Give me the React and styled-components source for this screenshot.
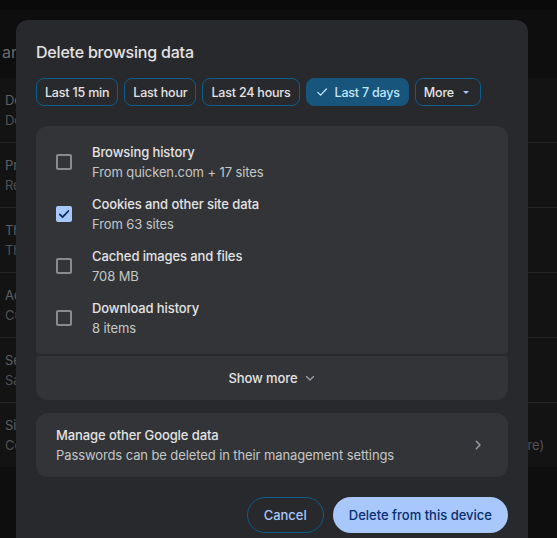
import styled, { createGlobalStyle } from 'styled-components';

const GlobalStyle = createGlobalStyle`
  html, body {
    margin: 0;
    background: #0e0e0e;
    font-family: Inter, "Noto Sans", "Liberation Sans", sans-serif;
    -webkit-font-smoothing: antialiased;
  }
`

const settingsRows = [
  {title: 'Delete browsing data', text: 'Delete history, cookies, cache, and more'},
  {title: 'Privacy Guide', text: 'Review key privacy and security controls'},
  {title: 'Third-party cookies', text: 'Third-party cookies are blocked in Incognito mode'},
  {title: 'Ad privacy', text: 'Customize the info used by sites to show you ads'},
  {title: 'Security', text: 'Safe Browsing (protection from dangerous sites) and other security settings'},
  {title: 'Site settings', text: 'Controls what information sites can use and show (location, camera, pop-ups, and more)'},
]

const ranges = ['Last 15 min', 'Last hour', 'Last 24 hours', 'Last 7 days']

const dataTypes = [
  {title: 'Browsing history', text: 'From quicken.com + 17 sites', checked: false},
  {title: 'Cookies and other site data', text: 'From 63 sites', checked: true},
  {title: 'Cached images and files', text: '708 MB', checked: false},
  {title: 'Download history', text: '8 items', checked: false},
]

const CheckIcon = ({size = 12, color = 'currentColor', width = 1.6}) => (
  <svg width={size} height={size} viewBox="0 0 12 12" fill="none">
    <path d="M1.8 6.4 L4.6 9.1 L10.4 3" stroke={color} strokeWidth={width} strokeLinecap="round" strokeLinejoin="round"/>
  </svg>
)

const Chevron = ({dir = 'down'}) => (
  <svg width="12" height="12" viewBox="0 0 12 12" fill="none">
    {dir === 'down'
      ? <path d="M2.5 4.5 L6 8 L9.5 4.5" stroke="#9aa0a6" strokeWidth="1.3" strokeLinecap="round" strokeLinejoin="round"/>
      : <path d="M4.3 2.2 L8 6 L4.3 9.8" stroke="#9aa0a6" strokeWidth="1.4" strokeLinecap="round" strokeLinejoin="round"/>}
  </svg>
)

const App = () => {
  return (
    <Page>
      <GlobalStyle/>
      <TopStrip/>
      <Header>and security</Header>
      <SettingsCard>
        {settingsRows.map(row => (
          <SettingsRow key={row.title}>
            <RowTitle>{row.title}</RowTitle>
            <RowText>{row.text}</RowText>
          </SettingsRow>
        ))}
      </SettingsCard>

      <Dialog>
        <Title>Delete browsing data</Title>

        <Chips>
          {ranges.map(r => (
            <Chip key={r} $selected={r === 'Last 7 days'}>
              {r === 'Last 7 days' && <CheckIcon size={12} width={1.3}/>}
              {r}
            </Chip>
          ))}
          <Chip $more>
            More
            <Caret/>
          </Chip>
        </Chips>

        <TypesPanel>
          {dataTypes.map(item => (
            <TypeItem key={item.title}>
              <Checkbox $checked={item.checked}>
                {item.checked && <CheckIcon size={12} color="#0b2a5e" width={1.8}/>}
              </Checkbox>
              <div>
                <ItemTitle>{item.title}</ItemTitle>
                <ItemText>{item.text}</ItemText>
              </div>
            </TypeItem>
          ))}
        </TypesPanel>
        <ShowMore>
          Show more
          <Chevron dir="down"/>
        </ShowMore>

        <ManagePanel>
          <div>
            <ItemTitle>Manage other Google data</ItemTitle>
            <ItemText>Passwords can be deleted in their management settings</ItemText>
          </div>
          <Chevron dir="right"/>
        </ManagePanel>

        <Actions>
          <CancelButton>Cancel</CancelButton>
          <DeleteButton>Delete from this device</DeleteButton>
        </Actions>
      </Dialog>
    </Page>
  )
}
export default App

const Page = styled.div`
  position: relative;
  height: 538px;
  overflow: hidden;
  background: #0e0e0e;
`

const TopStrip = styled.div`
  height: 10px;
  background: #0a0a0a;
`

const Header = styled.div`
  height: 68px;
  box-sizing: border-box;
  padding: 32px 0 0 2px;
  color: #6b6b6b;
  font-size: 16px;
  line-height: 20px;
  white-space: nowrap;
`

const SettingsCard = styled.div`
  background: #131314;
  height: 389px;
`

const SettingsRow = styled.div`
  height: 65px;
  box-sizing: border-box;
  padding: 12px 5px 0;
  border-bottom: 1px solid #242526;
  white-space: nowrap;
  letter-spacing: -0.08px;

  &:last-child {
    border-bottom: none;
  }
`

const RowTitle = styled.div`
  font-size: 13px;
  line-height: 20px;
  color: #5f6062;
`

const RowText = styled.div`
  font-size: 13px;
  line-height: 20px;
  color: #505153;
`

const Dialog = styled.div`
  position: absolute;
  left: 16px;
  top: 20px;
  width: 512px;
  bottom: -20px;
  box-sizing: border-box;
  padding: 20px 20px 0;
  background: #28292c;
  border-radius: 12px;
  display: flex;
  flex-direction: column;
`

const Title = styled.h2`
  margin: 0;
  font-size: 16px;
  line-height: 24px;
  font-weight: 500;
  color: #e3e3e3;
  letter-spacing: -0.2px;
`

const Chips = styled.div`
  display: flex;
  gap: 6px;
  margin-top: 14px;
`

const Chip = styled.div`
  height: 28px;
  box-sizing: border-box;
  display: flex;
  align-items: center;
  gap: 7px;
  padding: ${p => p.$selected ? '0 8px 0 9px' : p.$more ? '0 11px 0 8px' : '0 8px'};
  border: 1px solid ${p => p.$selected ? '#17557c' : '#0b5d8c'};
  background: ${p => p.$selected ? '#17557c' : 'transparent'};
  border-radius: 8px;
  font-size: 12.5px;
  letter-spacing: -0.2px;
  font-weight: 500;
  color: ${p => p.$selected ? '#c2e7ff' : '#e3e3e3'};
  white-space: nowrap;
`

const Caret = styled.span`
  width: 0;
  height: 0;
  margin-left: 2px;
  border-left: 3.5px solid transparent;
  border-right: 3.5px solid transparent;
  border-top: 3.5px solid #a8c7fa;
`

const TypesPanel = styled.div`
  margin-top: 20px;
  background: #333438;
  border-radius: 12px 12px 4px 4px;
  padding: 16px 0;
  display: flex;
  flex-direction: column;
  gap: 12px;
`

const TypeItem = styled.div`
  display: flex;
  align-items: center;
  gap: 20px;
  padding-left: 20px;
`

const Checkbox = styled.div`
  width: 16px;
  height: 16px;
  box-sizing: border-box;
  border-radius: 2px;
  border: 2px solid ${p => p.$checked ? '#a8c7fa' : '#8a8b8d'};
  background: ${p => p.$checked ? '#a8c7fa' : 'transparent'};
  display: grid;
  place-items: center;
  flex: none;
`

const ItemTitle = styled.div`
  font-size: 13px;
  line-height: 20px;
  font-weight: 500;
  color: #e3e3e3;
  letter-spacing: -0.1px;
`

const ItemText = styled.div`
  font-size: 13px;
  line-height: 20px;
  color: #c4c7c5;
  letter-spacing: -0.1px;
`

const ShowMore = styled.div`
  margin-top: 2px;
  height: 44px;
  background: #333438;
  border-radius: 4px 4px 12px 12px;
  display: flex;
  align-items: center;
  justify-content: center;
  gap: 6px;
  font-size: 13px;
  font-weight: 500;
  color: #e3e3e3;
  letter-spacing: -0.1px;
`

const ManagePanel = styled.div`
  margin-top: 13px;
  height: 64px;
  box-sizing: border-box;
  padding: 0 24px 0 20px;
  background: #333438;
  border-radius: 12px;
  display: flex;
  align-items: center;
  justify-content: space-between;
`

const Actions = styled.div`
  display: flex;
  justify-content: flex-end;
  gap: 9px;
  margin-top: 20px;
`

const Button = styled.button`
  height: 36px;
  box-sizing: border-box;
  border-radius: 18px;
  font-family: inherit;
  font-size: 13px;
  font-weight: 500;
  padding: 0 16px;
`

const CancelButton = styled(Button)`
  border: 1px solid #0b5d8c;
  background: transparent;
  color: #a8c7fa;
`

const DeleteButton = styled(Button)`
  border: none;
  background: #a8c7fa;
  color: #062e6f;
`
